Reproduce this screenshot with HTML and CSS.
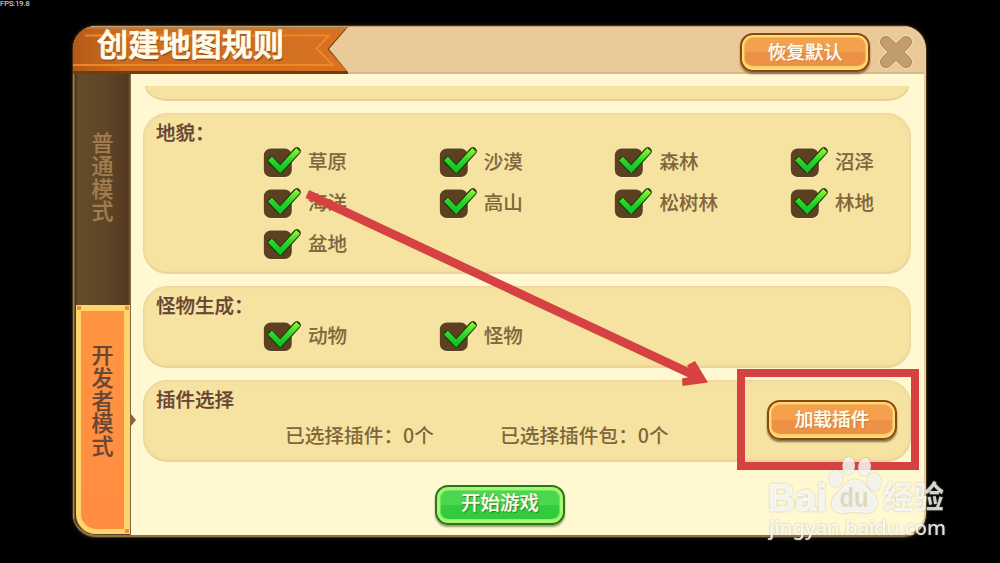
FILE: index.html
```html
<!DOCTYPE html>
<html lang="zh-CN">
<head>
<meta charset="utf-8">
<title>创建地图规则</title>
<link rel="stylesheet" href="styles.css">
</head>
<body>
<svg class="defs" width="0" height="0">
  <defs>
    <linearGradient id="tick" x1="0" y1="0" x2="0" y2="1">
      <stop offset="0" stop-color="#8cf52c"/><stop offset=".55" stop-color="#2bd529"/><stop offset="1" stop-color="#10c42a"/>
    </linearGradient>
    <linearGradient id="ribbon" x1="0" x2="1">
      <stop offset="0" stop-color="#b45a17"/><stop offset=".2" stop-color="#cf6d1e"/><stop offset="1" stop-color="#d67222"/>
    </linearGradient>
    <symbol id="check" viewBox="0 0 40 34">
      <rect x=".3" y="2.300" width="29" height="29.500" rx="7.500" fill="#fdf3c4" opacity=".7"/>
      <rect x=".8" y="2.500" width="28" height="28.500" rx="7" fill="#5c4020"/>
      <path d="M8.500 14.500L17.200 23.600L33.800 5.200" fill="none" stroke="#203e0d" stroke-width="7.800" stroke-linecap="round" stroke-linejoin="round"/>
      <path d="M7 12.700L17.200 23.400L35.200 3.800" fill="none" stroke="url(#tick)" stroke-width="5.400"/>
    </symbol>
  </defs>
</svg>
<div class="fps">FPS:19.8</div>
<main class="dialog">
  <header class="header">
    <div class="ribbon">
      <svg class="ribbon-art" viewBox="0 0 277 48" width="277" height="48">
        <path d="M0 0H275L256 22L275 45V47H0Z" fill="#763b0b"/>
        <path d="M0 0H274L254.500 22L274 44H0Z" fill="url(#ribbon)"/>
        <path d="M0 1H274" stroke="#b98348" stroke-width="1.500"/>
        <path d="M12 8.500H256L243.500 21.500L260 38H0" fill="none" stroke="#f18626" stroke-width="2"/>
      </svg>
      <h1 class="title">创建地图规则</h1>
    </div>
    <button class="btn reset">恢复默认</button>
    <svg class="close" viewBox="0 0 34 34" width="34" height="34">
      <path d="M7 7L27 27M27 7L7 27" stroke="#f0dbad" stroke-width="14" stroke-linecap="round"/>
      <path d="M7 7L27 27M27 7L7 27" stroke="#b18a59" stroke-width="12" stroke-linecap="round"/>
      <path d="M7.500 7.500L26.500 26.500M26.500 7.500L7.500 26.500" stroke="#c49d6c" stroke-width="10.500" stroke-linecap="round"/>
    </svg>
  </header>
  <div class="body">
    <nav class="side">
      <div class="tab">普通模式</div>
      <div class="tab active"><span class="tab-face">开发者模式</span><i class="dot tl"></i><i class="dot tr"></i><i class="dot br"></i></div>
    </nav>
    <div class="content">
      <section class="panel clipped"></section>
      <section class="panel terrain">
        <h2>地貌：</h2>
        <div class="grid">
          <label><svg><use href="#check"/></svg>草原</label>
          <label><svg><use href="#check"/></svg>沙漠</label>
          <label><svg><use href="#check"/></svg>森林</label>
          <label><svg><use href="#check"/></svg>沼泽</label>
          <label><svg><use href="#check"/></svg>海洋</label>
          <label><svg><use href="#check"/></svg>高山</label>
          <label><svg><use href="#check"/></svg>松树林</label>
          <label><svg><use href="#check"/></svg>林地</label>
          <label><svg><use href="#check"/></svg>盆地</label>
        </div>
      </section>
      <section class="panel monsters">
        <h2>怪物生成：</h2>
        <div class="grid">
          <label><svg><use href="#check"/></svg>动物</label>
          <label><svg><use href="#check"/></svg>怪物</label>
        </div>
      </section>
      <section class="panel plugins">
        <div class="plugin-info">
          <h2>插件选择</h2>
          <div class="counts"><span>已选择插件：0个</span><span>已选择插件包：0个</span></div>
        </div>
        <button class="btn">加载插件</button>
      </section>
      <button class="btn green">开始游戏</button>
    </div>
  </div>
</main>
<svg class="overlay" viewBox="0 0 1000 563" width="1000" height="563">
  <path d="M309 190L688.500 367.800L687 365.300L695 361L708 382.500L682.500 386L682 378.500L688 377.300L305.500 198Z" fill="#d64141"/>
  <rect x="741" y="373" width="174" height="93" fill="none" stroke="#d64141" stroke-width="8"/>
  <g class="mark">
    <text class="brand" x="768" y="511" textLength="59" lengthAdjust="spacingAndGlyphs">Bai</text>
    <g class="paw">
      <ellipse cx="835.800" cy="478.500" rx="6.500" ry="8.300"/>
      <ellipse cx="848.700" cy="465.800" rx="6.300" ry="8.800"/>
      <ellipse cx="864.500" cy="467" rx="6.300" ry="8.800" transform="rotate(8 864.500 467)"/>
      <ellipse cx="874.300" cy="482" rx="6.800" ry="8.500"/>
      <path d="M855 479.500C864 479.500 866 487 871.500 492C882 501 878 513 866 513C860 513 858 512 854 512C850 512 848 513 843 513C831 513 828 501 838 492C845 486 847 479.500 855 479.500Z"/>
    </g>
    <text class="du" x="839.500" y="506.500" textLength="29" lengthAdjust="spacingAndGlyphs">du</text>
    <text class="jingyan" x="883" y="508" textLength="61" lengthAdjust="spacingAndGlyphs">经验</text>
    <text class="url" x="769" y="534.500" textLength="177" lengthAdjust="spacingAndGlyphs">jingyan.baidu.com</text>
  </g>
</svg>
</body>
</html>
```
FILE: styles.css
```css
* { box-sizing: border-box; }
body {
  margin: 0;
  width: 1000px;
  height: 563px;
  overflow: hidden;
  background: #000;
  font-family: "Noto Sans CJK SC", sans-serif;
}
.defs { position: absolute; }
.fps {
  height: 26px;
  font: 7.5px/8px Roboto, sans-serif;
  color: #eee;
}
.dialog {
  width: 853px;
  height: 511px;
  margin-left: 73px;
  border-radius: 23px;
  overflow: hidden;
  background: #fff8d1;
  box-shadow: 0 0 0 1px #423018, 0 0 5px 1px #24180c;
  border-right: 2px solid #e3cda0;
  border-bottom: 2px solid #8c7344;
}
.header {
  height: 48px;
  display: flex;
  align-items: flex-start;
  background: #eaca98;
  border-top: 1px solid #c3a172;
  border-bottom: 2px solid #d6b98a;
}
.ribbon { width: 277px; height: 47px; margin-right: 390px; display: grid; flex: none; }
.ribbon-art { grid-area: 1 / 1; }
.title {
  grid-area: 1 / 1;
  width: 230px;
  height: 46px;
  margin: 0 0 0 24px;
  font-size: 31.2px;
  line-height: 32px;
  font-weight: 500;
  color: #fffbe9;
  -webkit-text-stroke: .9px #fffbe9;
  text-shadow: 1px 2px 1px #92501d;
  z-index: 1;
}
.btn {
  flex: none;
  width: 130px;
  height: 39px;
  padding: 0 0 4px;
  border: 2px solid #8b480d;
  border-radius: 13px;
  font: 500 18.7px/29px "Noto Sans CJK SC", sans-serif;
  color: #fffbed;
  -webkit-text-stroke: .2px #fffbed;
  text-shadow: 1px 1px 0 #ce8140;
  background: linear-gradient(#f4a14d 0 50%, #ed9147 50%);
  box-shadow: inset 0 0 0 2px #ffda77, inset 0 -3px 0 1px #ffce68, inset 0 0 0 3px #f7b55b, 0 2px 2px #8b704e;
}
.reset { margin-top: 6px; }
.close { margin: 8px 0 0 9px; }
.body { display: flex; height: 461px; }
.side {
  width: 58px;
  height: 461px;
  flex: none;
  padding: 0 1px 1px 3px;
  background: linear-gradient(90deg, #9b8050 0 1px, #4a3519 2px, #644b2a 5px, #5e4527 60%, #53371f 95%, #8b7350 100%);
}
.tab {
  height: 231px;
  padding: 56px 15.500px 0;
  width: 54px;
  font-size: 22px;
  line-height: 22.800px;
  font-weight: 500;
  color: #a17d50;
  -webkit-text-stroke: .2px currentColor;
  word-break: break-all;
}
.tab.active {
  position: relative;
  padding: 0;
  height: 229px;
  border: 5px solid #ffd46b;
  border-top-width: 6px;
  border-right-width: 6px;
  border-radius: 0 0 0 20px;
  background: linear-gradient(#ff9440, #ff8d42);
  color: #684638;
}
.tab-face { display: block; width: 23px; margin: 31px auto 0 10.500px; }
.dot { position: absolute; width: 4px; height: 4px; background: #f7873f; }
.tl { left: -4px; top: -5px; }
.tr { right: -5px; top: -5px; }
.br { right: -5px; bottom: -4px; }
.content { width: 793px; padding: 12px 13px 0 12px; display: flex; flex-direction: column; position: relative; }
.content::before {
  content: "";
  position: absolute;
  left: 0;
  top: 340px;
  border: 6px solid transparent;
  border-left: 5px solid #8d6237;
  border-right: 0;
}
.panel {
  width: 768px;
  flex: none;
  border-radius: 24px;
  border: 1px solid #edd39d;
  background: #f6e3a1;
  box-shadow: inset 0 0 4px #f2d79c, inset 0 -1px 1px #e9c997;
}
.clipped { width: 764px; margin-left: 2px; height: 15px; border-radius: 0 0 22px 22px / 0 0 15px 15px; border-top: 0; box-shadow: inset 0 -1px 1px #e9c997; }
.terrain { height: 161px; margin-top: 12px; }
.monsters { height: 82px; margin-top: 12px; }
.plugins { height: 82px; margin-top: 12px; display: flex; }
.panel h2 { margin: 5px 0 0 12px; font-size: 19.5px; line-height: 26px; font-weight: 500; color: #674434; -webkit-text-stroke: .25px #674434; }
.terrain h2 { margin-bottom: 1px; }
.monsters h2 { margin-bottom: 2px; }
.grid { display: grid; grid-template-columns: repeat(4, 175.700px); padding-left: 119px; grid-auto-rows: 41px; }
.grid label { display: flex; align-items: flex-start; font-size: 19.5px; line-height: 29px; font-weight: 500; color: #80663c; -webkit-text-stroke: .1px #80663c; }
.grid svg { width: 40px; height: 34px; margin-right: 5px; }
.plugin-info { width: 623px; }
.counts { display: flex; gap: 66px; margin: 10px 0 0 141px; font-size: 19.7px; line-height: 26px; font-weight: 500; color: #80663c; white-space: nowrap; }
.plugins .btn { margin-top: 19px; height: 40px; line-height: 28px; padding-bottom: 5px; }
.green {
  height: 40px;
  margin: 23px 0 0 292px;
  padding-bottom: 7px;
  border-color: #237a16;
  font-size: 19.5px;
  line-height: 28px;
  background: linear-gradient(#4bd750 0 50%, #32cb3c 50%);
  text-shadow: 1px 1px 1px #277f28;
  box-shadow: inset 0 0 0 3px #a5f578, inset 0 -3px 0 1px #9cec6c, inset 0 0 0 4px #74df5c, 0 2px 2px #9c956f;
}
.overlay { position: absolute; left: 0; top: 0; }
.mark { filter: drop-shadow(0 0 1px #8d897999); }
.mark text, .paw { fill: #fff; fill-opacity: .78; }
.mark .brand { font: 700 39px "Liberation Sans", sans-serif; stroke: #fff; stroke-opacity: .6; stroke-width: 1.200px; }
.mark .du { font: 700 27px "Liberation Sans", sans-serif; fill: #d8d2b4; }
.mark .jingyan { font: 700 31px "Noto Sans CJK SC", sans-serif; }
.mark .url { font: 500 20px "Noto Sans", sans-serif; fill-opacity: .85; }
```
